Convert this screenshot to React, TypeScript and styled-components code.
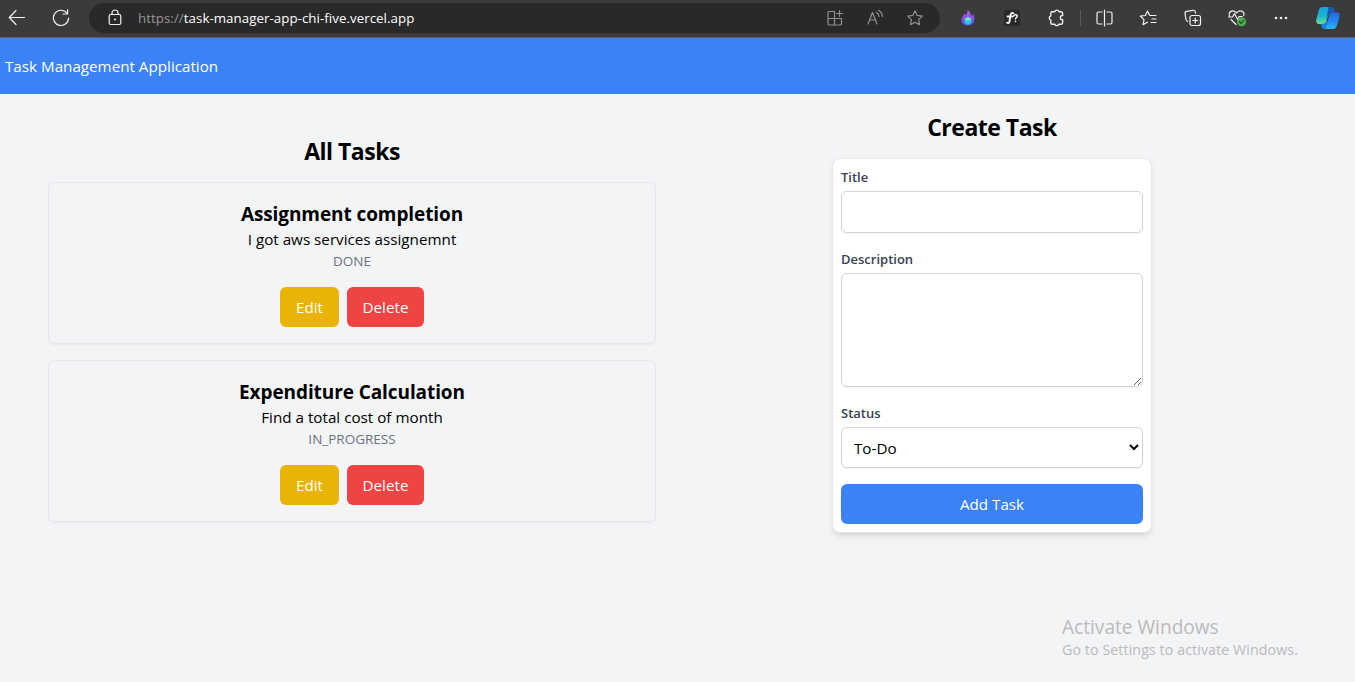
import React from "react";
import styled, { createGlobalStyle } from "styled-components";

const GlobalStyle = createGlobalStyle`
  *, *::before, *::after { box-sizing: border-box; }
  body {
    margin: 0;
    background: #f3f4f6;
    font-family: "Open Sans", "Noto Sans", sans-serif;
    font-size: 15.2px;
    line-height: 24px;
    color: #000;
    overflow: hidden;
  }
  h1, h2, h3, p { margin: 0; }
  button, input, textarea, select { font: inherit; }
`;

const Page = styled.div`
  height: 682px;
  display: flex;
  flex-direction: column;
  position: relative;
`;

const BrowserBar = styled.div`
  height: 38px;
  flex: none;
  display: flex;
  align-items: flex-start;
  background: #3b3b3b;
  border-bottom: 1px solid #5c5f66;
  color: #f0f0f0;
`;

const Icon = styled.svg`
  display: block;
  flex: none;
  fill: none;
  stroke: currentColor;
  stroke-width: 1.2;
  stroke-linecap: round;
  stroke-linejoin: round;
`;

const NavButtons = styled.div`
  width: 89px;
  height: 36px;
  padding-left: 7px;
  display: flex;
  align-items: center;
  gap: 24px;
`;

const AddressBar = styled.div`
  width: 851px;
  height: 30px;
  margin-top: 3px;
  padding: 0 15px 0 16px;
  display: flex;
  align-items: center;
  border-radius: 15px;
  background: #292929;
`;

const Url = styled.span`
  margin-left: 13px;
  flex: 1;
  font-size: 13.3px;
  line-height: 20px;
  letter-spacing: 0.05px;
  color: #fff;
  white-space: nowrap;
`;

const Scheme = styled.span`
  color: #969696;
`;

const AddressActions = styled.div`
  display: flex;
  gap: 20px;
  color: #909090;
`;

const Extensions = styled.div`
  height: 36px;
  padding-left: 18px;
  display: flex;
  align-items: center;
  gap: 24px;
`;

const BrowserActions = styled(Extensions)`
  padding-left: 24px;
`;

const Divider = styled.span`
  width: 1px;
  height: 16px;
  margin: 0 -10px;
  background: #5c5c5c;
`;

const Header = styled.header`
  height: 56px;
  flex: none;
  padding: 16px 5px;
  background: #3b82f6;
  color: #fff;
`;

const Main = styled.main`
  display: flex;
  flex: 1;
`;

const TasksColumn = styled.section`
  width: 704px;
  padding: 40px 48px;
  text-align: center;
`;

const CreateColumn = styled.section`
  width: 576px;
  padding-top: 16px;
  display: flex;
  flex-direction: column;
  align-items: center;
`;

const SectionTitle = styled.h2`
  margin-bottom: 15px;
  padding-top: 1px;
  font-size: 23px;
  line-height: 32px;
  font-weight: 700;
  letter-spacing: -0.5px;
`;

const Cards = styled.div`
  display: flex;
  flex-direction: column;
  gap: 16px;
`;

const Card = styled.article`
  padding: 16px;
  border: 1px solid #e5e7eb;
  border-radius: 6px;
  box-shadow: 0 1px 2px rgba(0, 0, 0, 0.05);
`;

const CardTitle = styled.h3`
  padding-top: 2px;
  font-size: 19px;
  line-height: 26px;
  font-weight: 700;
  letter-spacing: -0.09px;
`;

const CardText = styled.p`
  padding-top: 1px;
  line-height: 23px;
  letter-spacing: 0.01px;
`;

const CardStatus = styled.p`
  font-size: 13.5px;
  line-height: 20px;
  color: #6b7280;
`;

const CardActions = styled.div`
  margin-top: 16px;
  display: flex;
  justify-content: center;
  gap: 8px;
`;

const Button = styled.button<{ $color: string; $width: string }>`
  width: ${(p) => p.$width};
  height: 40px;
  padding: 0;
  border: 0;
  border-radius: 6px;
  background: ${(p) => p.$color};
  color: #fff;
`;

const Form = styled.form`
  width: 320px;
  padding: 8px;
  display: flex;
  flex-direction: column;
  gap: 16px;
  border: 1px solid #e5e7eb;
  border-radius: 8px;
  background: #fff;
  box-shadow: 0 4px 6px -1px rgba(0, 0, 0, 0.1), 0 2px 4px -2px rgba(0, 0, 0, 0.1);
`;

const Field = styled.label`
  display: flex;
  flex-direction: column;
  gap: 4px;
`;

const LabelText = styled.span`
  font-size: 13px;
  line-height: 20px;
  font-weight: 600;
  color: #374151;
`;

const Input = styled.input`
  height: 42px;
  padding: 8px 12px;
  border: 1px solid #d1d5db;
  border-radius: 6px;
  background: #fff;
  box-shadow: 0 1px 2px rgba(0, 0, 0, 0.05);
`;

const TextArea = styled.textarea`
  height: 114px;
  padding: 8px 12px;
  border: 1px solid #d1d5db;
  border-radius: 6px;
  background: #fff;
  box-shadow: 0 1px 2px rgba(0, 0, 0, 0.05);
  resize: vertical;
`;

const Select = styled.select`
  height: 41px;
  padding: 0 0 0 8px;
  border: 1px solid #d1d5db;
  border-radius: 6px;
  background: #fff;
  color: #000;
  box-shadow: 0 1px 2px rgba(0, 0, 0, 0.05);
`;

const Watermark = styled.div`
  position: absolute;
  left: 1062px;
  top: 614px;
  color: #b9babc;
  white-space: nowrap;
`;

const WatermarkTitle = styled.p`
  font-size: 19.1px;
  line-height: 26px;
`;

const WatermarkText = styled.p`
  font-size: 14.2px;
  line-height: 20px;
  letter-spacing: 0.1px;
`;

const tasks = [
  { title: "Assignment completion", text: "I got aws services assignemnt", status: "DONE" },
  { title: "Expenditure Calculation", text: "Find a total cost of month", status: "IN_PROGRESS" },
];

const star = "M10 2.8l2.2 4.6 5 .7-3.6 3.5.9 5-4.5-2.4-4.5 2.4.9-5-3.6-3.5 5-.7z";

const Toolbar = () => (
  <BrowserBar>
    <NavButtons>
      <Icon width="20" height="20" viewBox="0 0 20 20">
        <path d="M17.5 9.5H2.5M9 2.5L2.3 9.5 9 16.5" />
      </Icon>
      <Icon width="20" height="20" viewBox="0 0 20 20">
        <path d="M16 5.2A7.6 7.6 0 1 0 17.6 10M16.6 1.8V6h-4.5" />
      </Icon>
    </NavButtons>
    <AddressBar>
      <Icon width="20" height="20" viewBox="0 0 20 20">
        <rect x="4.2" y="6.5" width="11.6" height="10" rx="1.5" />
        <path d="M7 6.5V5a3 3 0 0 1 6 0v1.5" />
        <circle cx="10" cy="11.5" r="1" fill="currentColor" stroke="none" />
      </Icon>
      <Url>
        <Scheme>https://</Scheme>task-manager-app-chi-five.vercel.app
      </Url>
      <AddressActions>
        <Icon width="20" height="20" viewBox="0 0 20 20">
          <path d="M9.5 3.5H4a1 1 0 0 0-1 1V16a1 1 0 0 0 1 1h11.5a1 1 0 0 0 1-1v-5.5M3 10.5h13.5M9.5 3.5V17M14.5 2.5v6M11.5 5.5h6" />
        </Icon>
        <Icon width="20" height="20" viewBox="0 0 20 20">
          <path d="M3 16L7.5 4.5 12 16M4.6 12h5.8M11.5 4.5a5 5 0 0 1 2.5 4M13.5 2.3a8 8 0 0 1 4 6.2" />
        </Icon>
        <Icon width="20" height="20" viewBox="0 0 20 20">
          <path d={star} />
        </Icon>
      </AddressActions>
    </AddressBar>
    <Extensions>
      <Icon width="20" height="20" viewBox="0 0 20 20">
        <defs>
          <linearGradient id="flame" x1="0" y1="0" x2="0" y2="1">
            <stop offset="0" stopColor="#b65bea" />
            <stop offset="1" stopColor="#5a49f0" />
          </linearGradient>
        </defs>
        <g stroke="none">
          <path d="M9.5 2c4 3 3 5 4 6L15 6c1 3 2 4.5 1 7.5-1 3-4 4.200-7 4s-5.500-2-5.500-5.500C3.500 9 6 8 6 5.500L7.500 7C9 6 9.500 4 9.500 2z" fill="url(#flame)" />
          <path d="M10 9l3.500 2v4L10 17l-3.500-2v-4z" fill="#2cc5dc" />
          <path d="M10 9l3.500 2-3.500 1.800L6.500 11z" fill="#79f0b2" />
        </g>
      </Icon>
      <Icon width="20" height="20" viewBox="0 0 20 20">
        <rect x="2" y="2" width="16" height="16" rx="1.5" fill="#292929" stroke="none" />
        <path d="M11.500 5.300c-2-1-2.800.4-3.200 2.700l-.8 5.500c-.2 1.500-1.300 2-2.500 1.300M5.500 8.500h5" strokeWidth="1.900" />
        <path d="M11.800 8c.3-1.800 3.700-1.500 3.500.2-.1 1.300-1.800 1.300-1.800 2.800M13.500 13.300v.2" strokeWidth="1.500" />
      </Icon>
      <Icon width="20" height="20" viewBox="0 0 20 20">
        <path d="M6.300 3.700h2.500a2.200 2.200 0 0 1 4.200 0h2.100a1.500 1.500 0 0 1 1.500 1.500v2.300c-3-.3-3 4.600 0 4.300v2.900a1.500 1.500 0 0 1-1.500 1.500h-2.200a2.200 2.200 0 0 1-4.100 0H6.300a1.500 1.500 0 0 1-1.500-1.500v-2.600a2.200 2.200 0 0 1 0-4.200V5.200a1.500 1.500 0 0 1 1.500-1.500z" strokeWidth="1.400" />
      </Icon>
      <Divider />
      <Icon width="20" height="20" viewBox="0 0 20 20">
        <path d="M9.500 2v16M7 4H3.500A1.500 1.500 0 0 0 2 5.500v9A1.500 1.500 0 0 0 3.500 16H7M12 4h3.500A1.500 1.500 0 0 1 17 5.500v9a1.500 1.500 0 0 1-1.500 1.500H12" />
      </Icon>
    </Extensions>
    <BrowserActions>
      <Icon width="20" height="20" viewBox="0 0 20 20">
        <path d="M10.800 7.500H17M13 11h4M12 14.500h5M10.800 7.500L8.500 3 6.400 7.500l-5 .7L5 11.600l-.9 5 4.400-2.400" />
      </Icon>
      <Icon width="20" height="20" viewBox="0 0 20 20">
        <rect x="7" y="7.500" width="10.500" height="10" rx="2" />
        <path d="M12.250 10v5M9.750 12.500h5M4.800 13.500A2.500 2.500 0 0 1 3 11.500L2 5.500A2 2 0 0 1 3.700 3.300L10 2.300a2 2 0 0 1 2.300 1.600l.2 1.300" />
      </Icon>
      <Icon width="20" height="20" viewBox="0 0 20 20">
        <path d="M2.500 8C1 3 7 1 9.500 5c2.500-4 8.500-2 7.300 2.500M1.500 9h4l2-3.500 3 6 1.700-3h3M4 11.500l5 5" />
        <circle cx="14.500" cy="13.800" r="4.500" fill="#4caf50" stroke="none" />
        <path d="M12.500 14l1.500 1.400 2.800-3" stroke="#20402a" />
      </Icon>
      <Icon width="20" height="20" viewBox="0 0 20 20">
        <g fill="currentColor" stroke="none">
          <circle cx="5" cy="10" r="1.300" />
          <circle cx="10" cy="10" r="1.300" />
          <circle cx="15" cy="10" r="1.300" />
        </g>
      </Icon>
      <Icon width="26" height="24" viewBox="0 0 26 24">
        <defs>
          <linearGradient id="copilotLeft" x1="0" y1="0" x2="0" y2="1">
            <stop offset="0" stopColor="#16a6de" />
            <stop offset="0.500" stopColor="#18b5cf" />
            <stop offset="1" stopColor="#63df92" />
          </linearGradient>
          <linearGradient id="copilotRight" x1="0" y1="0" x2="0" y2="1">
            <stop offset="0" stopColor="#2367e8" />
            <stop offset="0.600" stopColor="#238cf5" />
            <stop offset="1" stopColor="#22b9f6" />
          </linearGradient>
        </defs>
        <g stroke="none">
          <path d="M7.500 1H16L11.300 15.500c-.6 1.800-1.500 2.500-3.500 2.500H4.500C1.500 18 .8 16 1.300 13.400L3.800 4.600C4.500 2 5.500 1 7.500 1z" fill="url(#copilotLeft)" />
          <path d="M13.500 1H17c1.800 0 2.300 1.800 3 5.500h-3.500c-2 0-3 .8-3.500 2.500L11 15z" fill="#1458b8" />
          <path d="M18 6.500h3.500c3 0 3.700 2 3 4.600l-2.400 8c-.8 2.700-2 3.900-4.300 3.900H10l4.500-14c.6-1.800 1.700-2.500 3.500-2.500z" fill="url(#copilotRight)" />
          <path d="M6 18h2c2 0 2.900-1 3.500-3L12.500 14 10 23H9.500C7.300 23 6.600 21 6 18z" fill="#1583e8" />
        </g>
      </Icon>
    </BrowserActions>
  </BrowserBar>
);

export default function App() {
  return (
    <Page>
      <GlobalStyle />
      <Toolbar />
      <Header>Task Management Application</Header>
      <Main>
        <TasksColumn>
          <SectionTitle>All Tasks</SectionTitle>
          <Cards>
            {tasks.map((task) => (
              <Card key={task.title}>
                <CardTitle>{task.title}</CardTitle>
                <CardText>{task.text}</CardText>
                <CardStatus>{task.status}</CardStatus>
                <CardActions>
                  <Button $color="#eab308" $width="59px">Edit</Button>
                  <Button $color="#ef4444" $width="77px">Delete</Button>
                </CardActions>
              </Card>
            ))}
          </Cards>
        </TasksColumn>
        <CreateColumn>
          <SectionTitle>Create Task</SectionTitle>
          <Form onSubmit={(e) => e.preventDefault()}>
            <Field>
              <LabelText>Title</LabelText>
              <Input type="text" />
            </Field>
            <Field>
              <LabelText>Description</LabelText>
              <TextArea />
            </Field>
            <Field>
              <LabelText>Status</LabelText>
              <Select defaultValue="todo">
                <option value="todo">To-Do</option>
              </Select>
            </Field>
            <Button $color="#3b82f6" $width="100%">Add Task</Button>
          </Form>
        </CreateColumn>
      </Main>
      <Watermark>
        <WatermarkTitle>Activate Windows</WatermarkTitle>
        <WatermarkText>Go to Settings to activate Windows.</WatermarkText>
      </Watermark>
    </Page>
  );
}
